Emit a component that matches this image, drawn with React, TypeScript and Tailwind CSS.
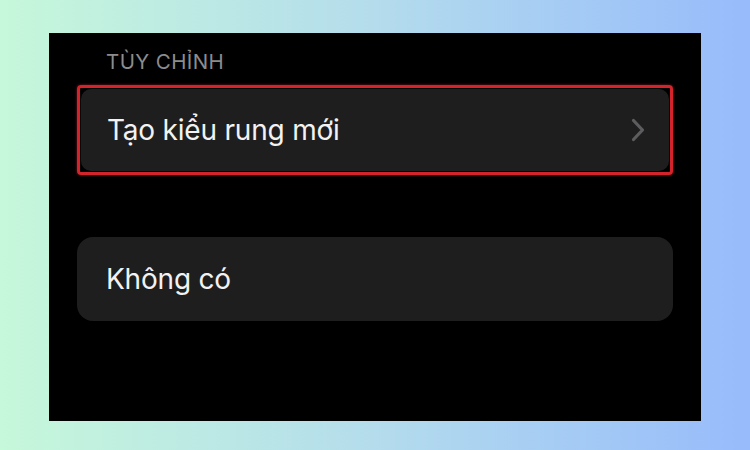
const font = { fontFamily: '"Inter", "Noto Sans", "Liberation Sans", sans-serif' };

function Chevron() {
  return (
    <svg width="14" height="24" viewBox="0 0 14 24" fill="none" className="text-[#5d5d5f]">
      <path d="M2.5 2.5 L11.5 12 L2.5 21.5" stroke="currentColor" strokeWidth="3.2" strokeLinecap="round" strokeLinejoin="round" />
    </svg>
  );
}

export default function App() {
  return (
    <div
      className="flex h-[450px] w-[750px] bg-gradient-to-r from-[#c6f8da] via-[#b4dcec] to-[#97bbfb] pl-[49px] pt-[33px]"
      style={font}
    >
      <div className="flex h-[388px] w-[652px] flex-col bg-black px-[28px]">
        <div className="mt-[16px] pl-[29px] text-[20.5px] leading-[26px] tracking-[0.4px] text-[#8c8c8e]">TÙY CHỈNH</div>

        <div className="mt-[10px] rounded-[4px] border-[3px] border-[#d3242c] p-[1px] shadow-[0_0_3px_rgba(211,36,44,0.6)]">
          <div className="flex h-[82px] items-center justify-between rounded-[10px] bg-[#1e1e1f] pl-[26px] pr-[24px]">
            <span className="text-[28px] tracking-[-0.2px] text-[#f2f2f2]">Tạo kiểu rung mới</span>
            <Chevron />
          </div>
        </div>

        <div className="mt-[62px] flex h-[84px] items-center rounded-[16px] bg-[#1e1e1f] pl-[29px]">
          <span className="text-[28px] tracking-[-0.2px] text-[#f2f2f2]">Không có</span>
        </div>
      </div>
    </div>
  );
}
